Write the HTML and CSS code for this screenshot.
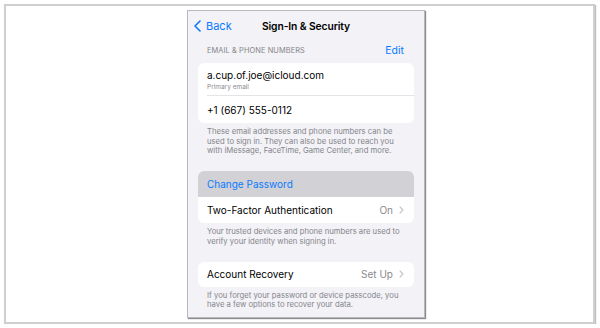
FILE: index.html
```html
<!DOCTYPE html>
<html>
<head>
<meta charset="utf-8">
<link rel="stylesheet" href="styles.css">
</head>
<body>
<div class="frame">
  <div class="phone">
    <div class="nav">
      <div class="back">
        <svg class="back-chev" width="7" height="12" viewBox="0 0 7 12"><path d="M6 1 L1 6 L6 11" fill="none" stroke="#0a7aff" stroke-width="1.6" stroke-linecap="round" stroke-linejoin="round"/></svg>
        <span>Back</span>
      </div>
      <div class="title">Sign-In &amp; Security</div>
    </div>
    <div class="section-head">
      <span class="caps">EMAIL &amp; PHONE NUMBERS</span>
      <span class="edit">Edit</span>
    </div>
    <div class="card">
      <div class="row row-email">
        <div class="main">a.cup.of.joe@icloud.com</div>
        <div class="sub">Primary email</div>
      </div>
      <div class="row row-phone">
        <div class="main">+1 (667) 555-0112</div>
      </div>
    </div>
    <div class="foot">These email addresses and phone numbers can be<br>used to sign in. They can also be used to reach you<br>with iMessage, FaceTime, Game Center, and more.</div>
    <div class="card card2">
      <div class="row row-pass">
        <div class="main blue">Change Password</div>
      </div>
      <div class="row row-two">
        <div class="main">Two-Factor Authentication</div>
        <div class="value">On <svg class="chev" width="5" height="8" viewBox="0 0 5 8"><path d="M1 1 L4 4 L1 7" fill="none" stroke="#c4c4c7" stroke-width="1.1" stroke-linecap="round" stroke-linejoin="round"/></svg></div>
      </div>
    </div>
    <div class="foot">Your trusted devices and phone numbers are used to<br>verify your identity when signing in.</div>
    <div class="card card3">
      <div class="row row-rec">
        <div class="main">Account Recovery</div>
        <div class="value">Set Up <svg class="chev" width="5" height="8" viewBox="0 0 5 8"><path d="M1 1 L4 4 L1 7" fill="none" stroke="#c4c4c7" stroke-width="1.1" stroke-linecap="round" stroke-linejoin="round"/></svg></div>
      </div>
    </div>
    <div class="foot">If you forget your password or device passcode, you<br>have a few options to recover your data.</div>
  </div>
</div>
</body>
</html>
```
FILE: styles.css
```css
* { box-sizing: border-box; }
html, body { margin: 0; padding: 0; background: #ffffff; }
body { font-family: Inter, "Noto Sans", sans-serif; color: #000; }

.frame {
  margin: 4px 0 0 4px;
  width: 591px;
  height: 320px;
  border: 2px solid #cfcfcf;
  box-shadow: 1px 1px 1px rgba(0,0,0,0.25);
  padding: 4px 0 0 181px;
  overflow: hidden;
}

.phone {
  width: 238px;
  height: 308px;
  background: #f2f2f7;
  border: 1px solid #b8b8bc;
  box-shadow: 1px 1px 1px rgba(0,0,0,0.45);
  overflow: hidden;
  padding: 0 10px;
  display: flex;
  flex-direction: column;
}

.nav {
  height: 29px;
  margin: 0 -10px;
  position: relative;
  display: flex;
  align-items: center;
  justify-content: center;
}
.back {
  position: absolute;
  left: 6px;
  top: 8px;
  display: flex;
  align-items: center;
  gap: 5px;
  color: #0a7aff;
  font-size: 11px;
}
.title {
  font-size: 10.3px;
  font-weight: 600;
  letter-spacing: -0.1px;
}

.section-head {
  height: 23px;
  display: flex;
  justify-content: space-between;
  align-items: center;
  padding: 0 10px 2px 9px;
}
.caps {
  font-size: 7.4px;
  color: #85858a;
  letter-spacing: 0.1px;
}
.edit {
  font-size: 10.5px;
  color: #0a7aff;
}

.card {
  background: #fff;
  border-radius: 6px;
  overflow: hidden;
}
.row {
  display: flex;
  align-items: center;
  justify-content: space-between;
  padding: 0 10px 0 9px;
}
.main { font-size: 10px; }
.blue { color: #0a7aff; }
.row-email {
  height: 33px;
  flex-direction: column;
  align-items: flex-start;
  justify-content: center;
  position: relative;
}
.row-email::after {
  content: "";
  position: absolute;
  left: 9px;
  right: 0;
  bottom: 0;
  height: 1px;
  background: #e4e4e8;
}
.sub {
  font-size: 6.5px;
  color: #8a8a8e;
  margin-top: 2px;
}
.row-phone { height: 27px; }
.row-pass { height: 26px; background: #d1d1d6; }
.row-two { height: 26px; }
.row-rec { height: 25px; }
.value {
  font-size: 10px;
  color: #8a8a8e;
  display: flex;
  align-items: center;
  gap: 6px;
}

.foot {
  font-size: 7.7px;
  line-height: 9.7px;
  color: #85858a;
  padding: 4px 9px 0 9px;
}
.card2 { margin-top: 15px; }
.card3 { margin-top: 15px; }
```
